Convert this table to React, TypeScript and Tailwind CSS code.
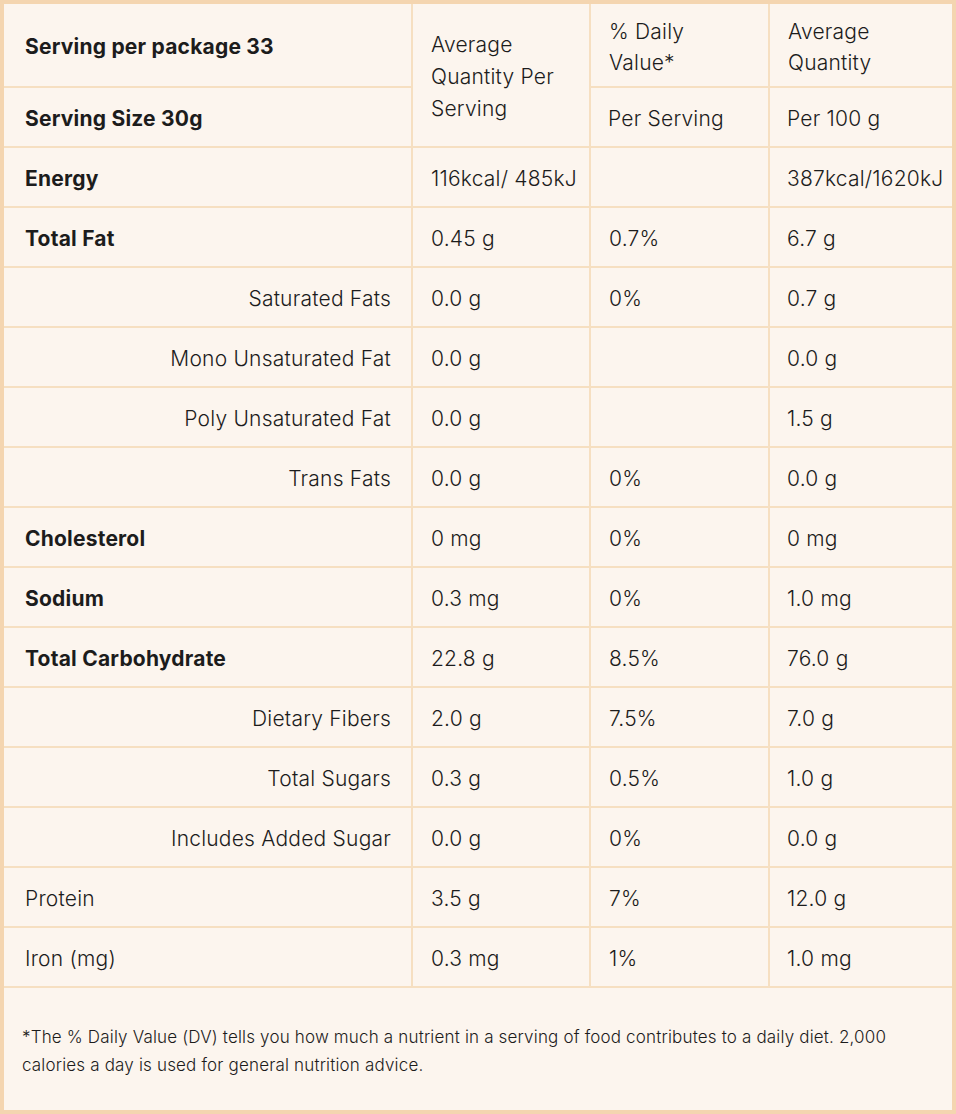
import React from 'react';

interface Row {
  label: string;
  bold?: boolean;
  sub?: boolean;
  perServing: string;
  dv: string;
  per100: string;
}

const rows: Row[] = [
  { label: 'Energy', bold: true, perServing: '116kcal/ 485kJ', dv: '', per100: '387kcal/1620kJ' },
  { label: 'Total Fat', bold: true, perServing: '0.45 g', dv: '0.7%', per100: '6.7 g' },
  { label: 'Saturated Fats', sub: true, perServing: '0.0 g', dv: '0%', per100: '0.7 g' },
  { label: 'Mono Unsaturated Fat', sub: true, perServing: '0.0 g', dv: '', per100: '0.0 g' },
  { label: 'Poly Unsaturated Fat', sub: true, perServing: '0.0 g', dv: '', per100: '1.5 g' },
  { label: 'Trans Fats', sub: true, perServing: '0.0 g', dv: '0%', per100: '0.0 g' },
  { label: 'Cholesterol', bold: true, perServing: '0 mg', dv: '0%', per100: '0 mg' },
  { label: 'Sodium', bold: true, perServing: '0.3 mg', dv: '0%', per100: '1.0 mg' },
  { label: 'Total Carbohydrate', bold: true, perServing: '22.8 g', dv: '8.5%', per100: '76.0 g' },
  { label: 'Dietary Fibers', sub: true, perServing: '2.0 g', dv: '7.5%', per100: '7.0 g' },
  { label: 'Total Sugars', sub: true, perServing: '0.3 g', dv: '0.5%', per100: '1.0 g' },
  { label: 'Includes Added Sugar', sub: true, perServing: '0.0 g', dv: '0%', per100: '0.0 g' },
  { label: 'Protein', perServing: '3.5 g', dv: '7%', per100: '12.0 g' },
  { label: 'Iron (mg)', perServing: '0.3 mg', dv: '1%', per100: '1.0 mg' },
];

const cell = 'border-2 border-[#f6dfc1] align-middle pt-[3px]';

export default function App() {
  return (
    <div
      className="w-[956px] h-[1114px] bg-[#fcf5ee] border-4 border-[#f4d5b0] text-[#1c1c1c]"
      style={{ fontFamily: 'Inter, "Noto Sans", sans-serif' }}
    >
      <table className="w-full table-fixed border-collapse border-hidden text-[21px] font-light tracking-[0.01em]">
        <colgroup>
          <col className="w-[408px]" />
          <col className="w-[178px]" />
          <col className="w-[179px]" />
          <col className="w-[183px]" />
        </colgroup>
        <tbody>
          {/* Header */}
          <tr className="h-[83px]">
            <td className={`${cell} pl-[21px] font-bold`}>Serving per package 33</td>
            <td rowSpan={2} className={`${cell} px-[18px] leading-[32px]`}>
              Average Quantity Per Serving
            </td>
            <td className={`${cell} px-[18px] leading-[31px]`}>% Daily Value*</td>
            <td className={`${cell} px-[18px] leading-[31px]`}>Average Quantity</td>
          </tr>
          <tr className="h-[60px]">
            <td className={`${cell} pl-[21px] font-bold`}>Serving Size 30g</td>
            <td className={`${cell} px-[17px]`}>Per Serving</td>
            <td className={`${cell} px-[17px]`}>Per 100 g</td>
          </tr>

          {/* Nutrients */}
          {rows.map((r) => (
            <tr key={r.label} className="h-[60px]">
              <td
                className={`${cell} ${r.sub ? 'text-right pr-[20px]' : 'pl-[21px]'} ${
                  r.bold ? 'font-bold' : ''
                }`}
              >
                {r.label}
              </td>
              <td className={`${cell} px-[18px] whitespace-nowrap`}>{r.perServing}</td>
              <td className={`${cell} px-[18px] whitespace-nowrap`}>{r.dv}</td>
              <td className={`${cell} px-[17px] whitespace-nowrap`}>{r.per100}</td>
            </tr>
          ))}

          {/* Footnote */}
          <tr className="h-[123px]">
            <td colSpan={4} className={`${cell} px-[18px] text-[17px] leading-[28px] tracking-[0.01em]`}>
              <p className="max-w-[880px]">
                *The % Daily Value (DV) tells you how much a nutrient in a serving of food contributes to a
                daily diet. 2,000 calories a day is used for general nutrition advice.
              </p>
            </td>
          </tr>
        </tbody>
      </table>
    </div>
  );
}
